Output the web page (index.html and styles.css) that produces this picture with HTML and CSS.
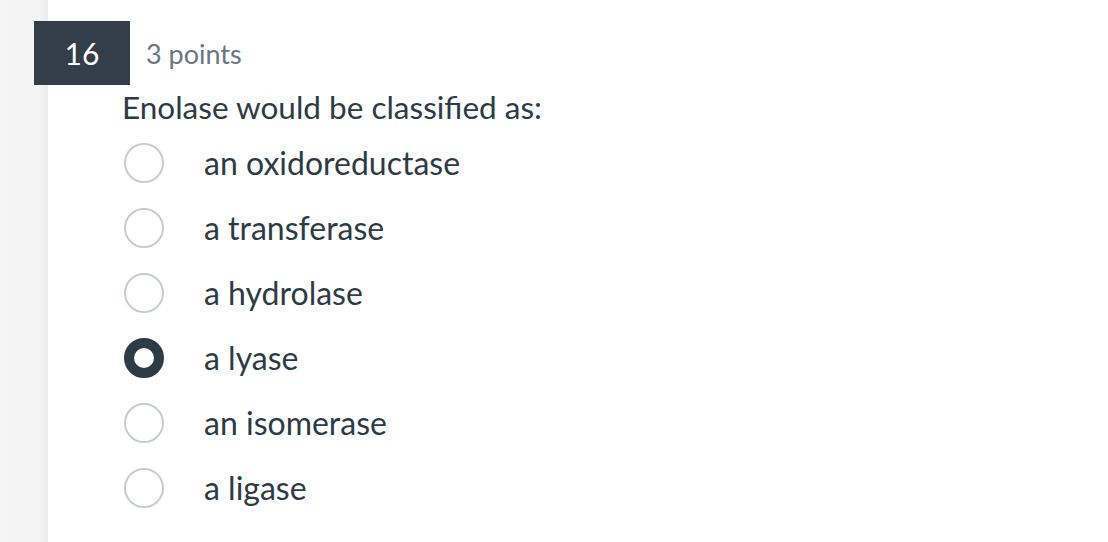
FILE: index.html
```html
<!DOCTYPE html>
<html lang="en">
<head>
<meta charset="utf-8">
<title>Question 16</title>
<link rel="stylesheet" href="styles.css">
</head>
<body>
<div class="page">
  <div class="rail"></div>
  <main class="panel">
    <div class="question">
      <div class="q-header">
        <div class="q-number">16</div>
        <div class="q-points">3 points</div>
      </div>
      <div class="q-text">Enolase would be classified as:</div>
      <ul class="answers">
        <li class="answer"><span class="radio"></span><span class="label">an oxidoreductase</span></li>
        <li class="answer"><span class="radio"></span><span class="label">a transferase</span></li>
        <li class="answer"><span class="radio"></span><span class="label">a hydrolase</span></li>
        <li class="answer"><span class="radio checked"></span><span class="label">a lyase</span></li>
        <li class="answer"><span class="radio"></span><span class="label">an isomerase</span></li>
        <li class="answer"><span class="radio"></span><span class="label">a ligase</span></li>
      </ul>
    </div>
  </main>
</div>
</body>
</html>
```
FILE: styles.css
```css
html, body {
  margin: 0;
  padding: 0;
  background: #ffffff;
  font-family: Lato, "Noto Sans", sans-serif;
  color: #2d3b45;
}

.page {
  display: flex;
  width: 1108px;
  height: 542px;
  overflow: hidden;
}

.rail {
  width: 48px;
  flex: none;
  background: linear-gradient(to right, #f5f5f5 0px, #f4f4f4 38px, #ececec 48px);
}

.panel {
  flex: 1;
  background: #ffffff;
}

.question {
  padding-top: 21px;
  padding-left: 74px;
}

.q-header {
  display: flex;
  align-items: center;
  margin-left: -88px;
  height: 64px;
}

.q-number {
  width: 96px;
  height: 64px;
  background: #333e48;
  color: #ffffff;
  font-size: 30px;
  display: flex;
  align-items: center;
  justify-content: center;
}

.q-points {
  margin-left: 16px;
  font-size: 27px;
  color: #6b7680;
}

.q-text {
  font-size: 31.5px;
  line-height: 45px;
  height: 45px;
}

.answers {
  list-style: none;
  margin: 0;
  padding: 0 0 0 2px;
}

.answer {
  display: flex;
  align-items: center;
  height: 65px;
}

.radio {
  width: 36px;
  height: 36px;
  border: 2px solid #c7cdd1;
  border-radius: 50%;
  flex: none;
  box-sizing: content-box;
}

.radio.checked {
  width: 20px;
  height: 20px;
  border: 10px solid #2d3b45;
  background: #ffffff;
}

.label {
  margin-left: 40px;
  font-size: 32px;
}
```
